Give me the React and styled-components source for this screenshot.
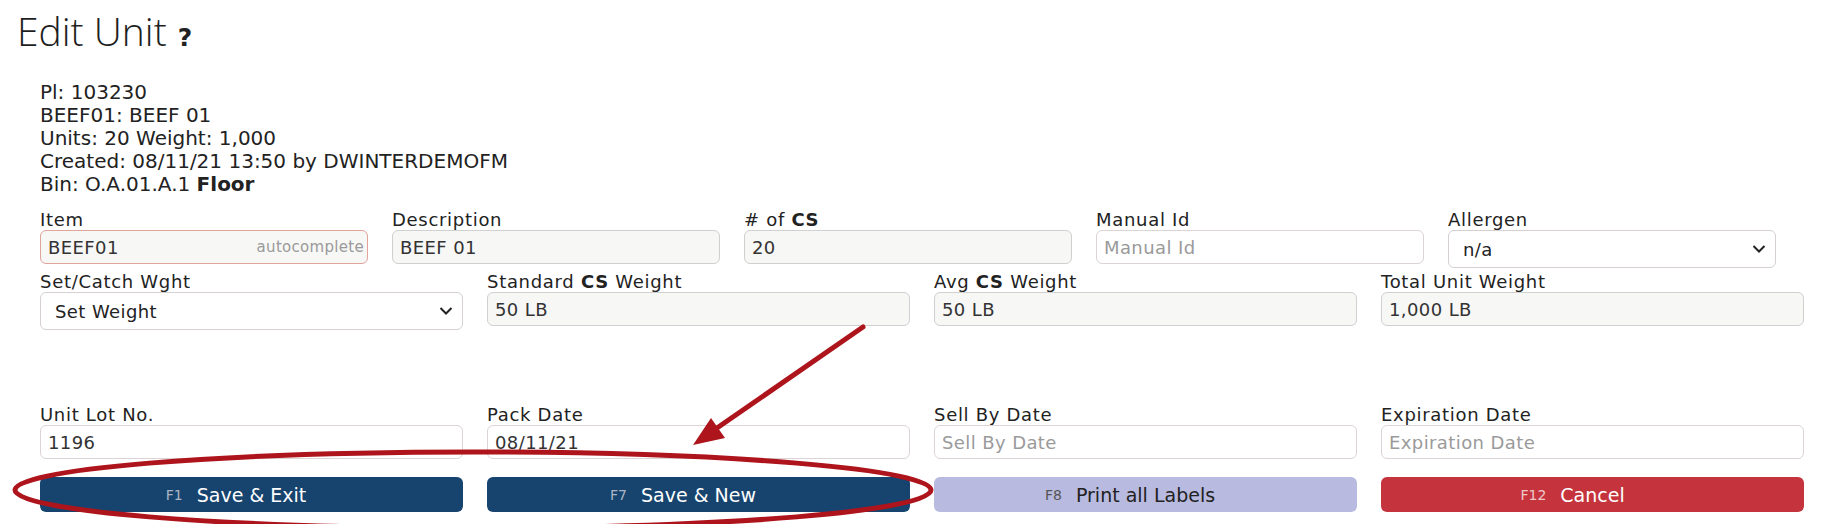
import React from "react";
import styled, { createGlobalStyle } from "styled-components";

const GlobalStyle = createGlobalStyle`
  html, body {
    margin: 0;
    padding: 0;
    background: #fff;
  }
  body {
    font-family: "DejaVu Sans", Verdana, sans-serif;
    color: #222;
  }
`;

const Page = styled.div`
  position: relative;
  width: 1836px;
  height: 524px;
  overflow: hidden;
`;

const Title = styled.h1`
  margin: 10px 0 0 17px;
  font-family: "Open Sans", "Noto Sans", sans-serif;
  font-weight: 300;
  font-size: 39px;
  line-height: 42px;
  color: #1e1e1e;
  display: flex;
  align-items: baseline;
  gap: 11px;
`;

const Help = styled.span`
  font-family: "DejaVu Sans", sans-serif;
  font-weight: 700;
  font-size: 25px;
  color: #222;
`;

const Info = styled.div`
  margin: 22px 0 0 40px;
  font-size: 20px;
  line-height: 23px;
  color: #222;

  b {
    font-weight: 700;
  }
`;

const Form = styled.div`
  margin: 13px 0 0 40px;
  width: 1764px;
`;

const Row = styled.div`
  display: grid;
  grid-template-columns: repeat(${(p) => p.$cols}, ${(p) => p.$colWidth}px);
  column-gap: 24px;
  margin-top: ${(p) => p.$top || 0}px;
  align-items: start;
`;

const Field = styled.div`
  display: flex;
  flex-direction: column;
`;

const Label = styled.label`
  font-size: 18px;
  line-height: 21px;
  letter-spacing: 0.7px;
  color: #222;
  white-space: nowrap;

  b {
    font-weight: 700;
  }
`;

const InputWrap = styled.div`
  position: relative;
`;

const Input = styled.input`
  box-sizing: border-box;
  width: 100%;
  height: 34px;
  padding: 0 7px;
  border: 1px solid ${(p) => (p.$error ? "#e2a39b" : p.readOnly ? "#d0d0d0" : "#dcd4d4")};
  border-radius: 6px;
  background: ${(p) => (p.readOnly ? "#f7f7f6" : "#fff")};
  font-family: "DejaVu Sans", Verdana, sans-serif;
  font-size: 18px;
  letter-spacing: 0.4px;
  color: #333;
  outline: none;

  &::placeholder {
    color: #9a9a9a;
  }
`;

const Hint = styled.span`
  position: absolute;
  right: 4px;
  top: 50%;
  transform: translateY(-50%);
  font-size: 15px;
  letter-spacing: 0.3px;
  color: #9a9a9a;
`;

const Select = styled.select`
  box-sizing: border-box;
  width: 100%;
  height: 38px;
  padding: 0 14px;
  border: 1px solid #d6d0d0;
  border-radius: 6px;
  background: #fff;
  font-family: "DejaVu Sans", Verdana, sans-serif;
  font-size: 18px;
  letter-spacing: 0.4px;
  color: #222;
  appearance: none;
  -webkit-appearance: none;
  outline: none;
`;

const Chevron = styled.svg`
  position: absolute;
  right: 10px;
  top: 50%;
  transform: translateY(-50%);
  pointer-events: none;
`;

const Button = styled.button`
  box-sizing: border-box;
  height: 35px;
  border: none;
  border-radius: 6px;
  background: ${(p) => p.$bg};
  color: ${(p) => p.$fg};
  display: grid;
  grid-template-columns: 1fr auto 1fr;
  align-items: center;
  padding: 0;
  font-family: "DejaVu Sans", Verdana, sans-serif;
  font-size: 19px;
  cursor: pointer;
`;

const Key = styled.span`
  justify-self: end;
  margin-right: 14px;
  font-size: 14px;
  color: ${(p) => p.$color};
`;

const Overlay = styled.svg`
  position: absolute;
  left: 0;
  top: 0;
  pointer-events: none;
`;

const ChevronIcon = () => (
  <Chevron width="14" height="9" viewBox="0 0 14 9">
    <polyline points="1.5,1.5 7,7 12.5,1.5" fill="none" stroke="#222" strokeWidth="2" />
  </Chevron>
);

const TextField = ({ label, value, placeholder, readOnly, error, hint }) => (
  <Field>
    <Label>{label}</Label>
    <InputWrap>
      <Input defaultValue={value} placeholder={placeholder} readOnly={readOnly} $error={error} />
      {hint && <Hint>{hint}</Hint>}
    </InputWrap>
  </Field>
);

const SelectField = ({ label, value }) => (
  <Field>
    <Label>{label}</Label>
    <InputWrap>
      <Select defaultValue={value}>
        <option>{value}</option>
      </Select>
      <ChevronIcon />
    </InputWrap>
  </Field>
);

const ActionButton = ({ k, text, bg, fg, keyColor }) => (
  <Button $bg={bg} $fg={fg}>
    <Key $color={keyColor}>{k}</Key>
    <span>{text}</span>
    <span />
  </Button>
);

export default function App() {
  return (
    <Page>
      <GlobalStyle />
      <Title>
        Edit Unit <Help>?</Help>
      </Title>

      <Info>
        <div>Pl: 103230</div>
        <div>BEEF01: BEEF 01</div>
        <div>Units: 20 Weight: 1,000</div>
        <div>Created: 08/11/21 13:50 by DWINTERDEMOFM</div>
        <div>
          Bin: O.A.01.A.1 <b>Floor</b>
        </div>
      </Info>

      <Form>
        <Row $cols={5} $colWidth={328}>
          <TextField label="Item" value="BEEF01" readOnly error hint="autocomplete" />
          <TextField label="Description" value="BEEF 01" readOnly />
          <TextField label={<># of <b>CS</b></>} value="20" readOnly />
          <TextField label="Manual Id" placeholder="Manual Id" />
          <SelectField label="Allergen" value="n/a" />
        </Row>

        <Row $cols={4} $colWidth={423} $top={3}>
          <SelectField label="Set/Catch Wght" value="Set Weight" />
          <TextField label={<>Standard <b>CS</b> Weight</>} value="50 LB" readOnly />
          <TextField label={<>Avg <b>CS</b> Weight</>} value="50 LB" readOnly />
          <TextField label="Total Unit Weight" value="1,000 LB" readOnly />
        </Row>

        <Row $cols={4} $colWidth={423} $top={74}>
          <TextField label="Unit Lot No." value="1196" />
          <TextField label="Pack Date" value="08/11/21" />
          <TextField label="Sell By Date" placeholder="Sell By Date" />
          <TextField label="Expiration Date" placeholder="Expiration Date" />
        </Row>

        <Row $cols={4} $colWidth={423} $top={18}>
          <ActionButton k="F1" text="Save & Exit" bg="#17446e" fg="#fff" keyColor="#aab4c4" />
          <ActionButton k="F7" text="Save & New" bg="#17446e" fg="#fff" keyColor="#aab4c4" />
          <ActionButton k="F8" text="Print all Labels" bg="#b8badf" fg="#222" keyColor="#555" />
          <ActionButton k="F12" text="Cancel" bg="#c5343d" fg="#fff" keyColor="#f0c8ca" />
        </Row>
      </Form>

      <Overlay width="1836" height="524" viewBox="0 0 1836 524">
        <ellipse cx="473" cy="490" rx="458" ry="38" fill="none" stroke="#ae141c" strokeWidth="5" />
        <line x1="863" y1="327" x2="717" y2="428" stroke="#ae141c" strokeWidth="5" strokeLinecap="round" />
        <polygon points="693,445 725,438 711,418" fill="#ae141c" />
      </Overlay>
    </Page>
  );
}
